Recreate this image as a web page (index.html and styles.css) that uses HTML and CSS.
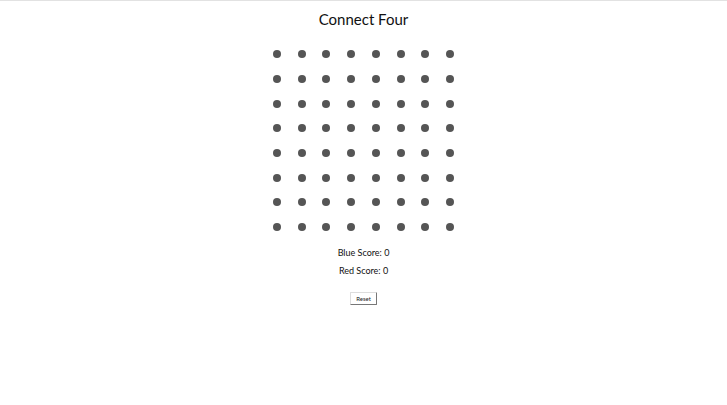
FILE: index.html
```html
<!DOCTYPE html>
<html>
<head>
<meta charset="utf-8">
<link rel="stylesheet" href="styles.css">
</head>
<body>
<div class="app">
  <h1 class="title">Connect Four</h1>
  <div class="board">
    <div class="dot"></div><div class="dot"></div><div class="dot"></div><div class="dot"></div><div class="dot"></div><div class="dot"></div><div class="dot"></div><div class="dot"></div>
    <div class="dot"></div><div class="dot"></div><div class="dot"></div><div class="dot"></div><div class="dot"></div><div class="dot"></div><div class="dot"></div><div class="dot"></div>
    <div class="dot"></div><div class="dot"></div><div class="dot"></div><div class="dot"></div><div class="dot"></div><div class="dot"></div><div class="dot"></div><div class="dot"></div>
    <div class="dot"></div><div class="dot"></div><div class="dot"></div><div class="dot"></div><div class="dot"></div><div class="dot"></div><div class="dot"></div><div class="dot"></div>
    <div class="dot"></div><div class="dot"></div><div class="dot"></div><div class="dot"></div><div class="dot"></div><div class="dot"></div><div class="dot"></div><div class="dot"></div>
    <div class="dot"></div><div class="dot"></div><div class="dot"></div><div class="dot"></div><div class="dot"></div><div class="dot"></div><div class="dot"></div><div class="dot"></div>
    <div class="dot"></div><div class="dot"></div><div class="dot"></div><div class="dot"></div><div class="dot"></div><div class="dot"></div><div class="dot"></div><div class="dot"></div>
    <div class="dot"></div><div class="dot"></div><div class="dot"></div><div class="dot"></div><div class="dot"></div><div class="dot"></div><div class="dot"></div><div class="dot"></div>
  </div>
  <p class="score">Blue Score: 0</p>
  <p class="score">Red Score: 0</p>
  <button class="reset">Reset</button>
</div>
</body>
</html>
```
FILE: styles.css
```css
html, body {
  margin: 0;
  padding: 0;
  background: #fff;
}
body {
  border-top: 1px solid #e2e2e2;
  font-family: "Lato", "Open Sans", sans-serif;
  color: #111;
}
.app {
  display: flex;
  flex-direction: column;
  align-items: center;
}
.title {
  margin: 7px 0 0 0;
  font-size: 15px;
  font-weight: 400;
  line-height: 22px;
}
.board {
  margin-top: 12px;
  display: grid;
  grid-template-columns: repeat(8, 24.7px);
  grid-auto-rows: 24.7px;
  place-items: center;
}
.dot {
  width: 8px;
  height: 8px;
  border-radius: 50%;
  background: #555;
}
.score {
  margin: 0;
  font-size: 9px;
  line-height: 18px;
}
.score:first-of-type {
  margin-top: 4px;
}
.reset {
  margin-top: 12px;
  font-family: "Lato", sans-serif;
  font-size: 6px;
  line-height: 7px;
  padding: 2px 5px;
  background: #fff;
  border: 1px solid #ddd;
  border-right-color: #777;
  border-bottom-color: #777;
  border-radius: 1px;
  color: #222;
}
```
